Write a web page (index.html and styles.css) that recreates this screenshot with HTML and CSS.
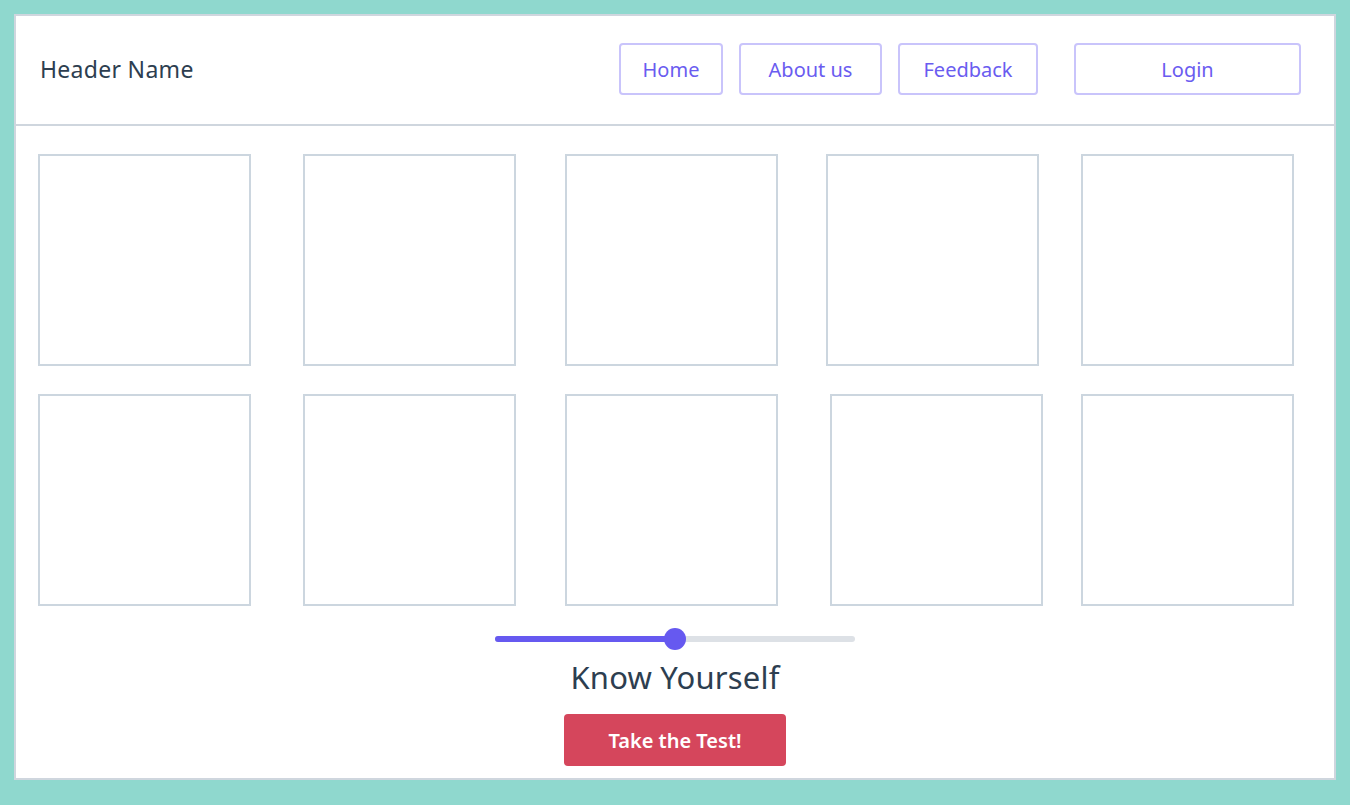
FILE: index.html
```html
<!DOCTYPE html>
<html>
<head>
<meta charset="utf-8">
<link rel="stylesheet" href="styles.css">
</head>
<body>
<div class="panel">
  <header class="header">
    <div class="brand">Header Name</div>
    <nav class="nav">
      <a class="nav-btn home">Home</a>
      <a class="nav-btn about">About us</a>
      <a class="nav-btn feedback">Feedback</a>
      <a class="nav-btn login">Login</a>
    </nav>
  </header>
  <main class="content">
    <div class="grid">
      <div class="box c1"></div><div class="box c2"></div><div class="box c3"></div><div class="box c4"></div><div class="box c5"></div>
      <div class="box c1"></div><div class="box c2"></div><div class="box c3"></div><div class="box c4 shift"></div><div class="box c5"></div>
    </div>
    <div class="slider">
      <div class="track"><div class="fill"></div><div class="thumb"></div></div>
    </div>
    <h1 class="title">Know Yourself</h1>
    <button class="cta">Take the Test!</button>
  </main>
</div>
</body>
</html>
```
FILE: styles.css
```css
* { box-sizing: border-box; }
html, body { margin: 0; padding: 0; }
body {
  background: #8fd8ce;
  padding: 14px;
  width: 1350px;
  height: 805px;
  font-family: "Noto Sans", "DejaVu Sans", sans-serif;
}
.panel {
  width: 1322px;
  height: 766px;
  background: #fff;
  border: 2px solid #cfd6de;
  display: flex;
  flex-direction: column;
}
.header {
  height: 110px;
  border-bottom: 2px solid #cfd6de;
  display: flex;
  align-items: center;
  padding-left: 24px;
}
.brand {
  font-size: 23px;
  color: #2d3e50;
  letter-spacing: 0.3px;
  margin-top: -2px;
}
.nav {
  display: flex;
  margin-left: auto;
  margin-right: 33px;
}
.nav-btn {
  height: 52px;
  border: 2px solid #c9c4fb;
  border-radius: 4px;
  color: #6a5cf0;
  font-size: 20px;
  display: flex;
  align-items: center;
  justify-content: center;
  margin-top: -2px;
}
.home { width: 104px; }
.about { width: 143px; margin-left: 16px; }
.feedback { width: 140px; margin-left: 16px; }
.login { width: 227px; margin-left: 36px; }
.content {
  flex: 1;
  display: flex;
  flex-direction: column;
  align-items: center;
}
.grid {
  align-self: stretch;
  display: grid;
  grid-template-columns: 213px 52px 213px 49px 213px 48px 213px 42px 213px;
  grid-auto-rows: 212px;
  row-gap: 28px;
  padding: 28px 0 0 22px;
}
.box { border: 2px solid #ccd6df; }
.c1 { grid-column: 1; }
.c2 { grid-column: 3; }
.c3 { grid-column: 5; }
.c4 { grid-column: 7; }
.c5 { grid-column: 9; }
.shift { margin-left: 4px; margin-right: -4px; }
.slider {
  margin-top: 21px;
  width: 360px;
  height: 24px;
  display: flex;
  align-items: center;
}
.track {
  position: relative;
  width: 100%;
  height: 6px;
  background: #dde1e6;
  border-radius: 3px;
}
.fill {
  width: 180px;
  height: 6px;
  background: #6659f0;
  border-radius: 3px;
}
.thumb {
  position: absolute;
  left: 169px;
  top: -8px;
  width: 22px;
  height: 22px;
  border-radius: 50%;
  background: #6659f0;
}
.title {
  margin: 0;
  margin-top: 5px;
  font-weight: 400;
  font-size: 31px;
  color: #2d3e50;
  letter-spacing: 0.2px;
}
.cta {
  margin-top: 16px;
  width: 222px;
  height: 52px;
  border: none;
  border-radius: 4px;
  background: #d5465c;
  color: #fff;
  font-family: inherit;
  font-size: 20px;
  font-weight: 600;
}
```
